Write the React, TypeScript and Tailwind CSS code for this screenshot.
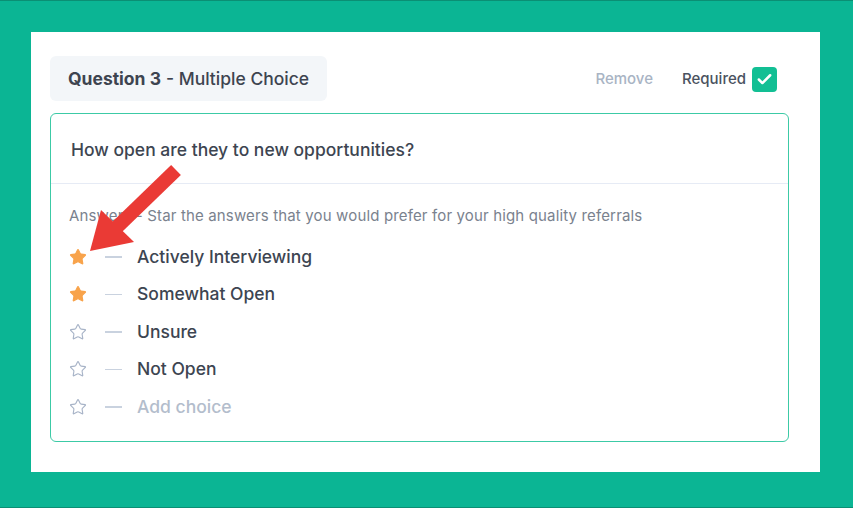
import { Star, Check } from "lucide-react";

const choices = [
  { label: "Actively Interviewing", starred: true },
  { label: "Somewhat Open", starred: true },
  { label: "Unsure", starred: false },
  { label: "Not Open", starred: false },
];

const Row = ({ label, starred, muted }: { label: string; starred: boolean; muted?: boolean }) => (
  <div className="flex h-[37.5px] items-center">
    <div className="flex w-[19px] justify-center">
      {starred ? (
        <Star className="h-[18px] w-[18px] text-[#f8a34b]" fill="#f8a34b" strokeWidth={1.5} />
      ) : (
        <Star className="h-[18px] w-[18px] text-[#a7b3c7]" strokeWidth={1.5} />
      )}
    </div>
    <div className="ml-[18px] h-[1.5px] w-[17px] bg-[#c9d2df]" />
    <span
      className={`ml-[15px] text-[17.5px] font-medium ${muted ? "text-[#b3bdcc]" : "text-[#3d4551]"}`}
    >
      {label}
    </span>
  </div>
);

export default function App() {
  return (
    <div
      className="relative h-[508px] w-[853px] border-b border-t border-[#0b8f74] bg-[#0bb594] pl-[31px] pr-[33px] pt-[31px] pb-[35px]"
      style={{ fontFamily: "Inter, 'Noto Sans', sans-serif" }}
    >
      <div className="h-[440px] bg-white pl-[19px] pr-[31px] pt-[24px]">
        {/* Header */}
        <div className="flex h-[45px] items-center justify-between">
          <div className="flex h-[45px] items-center rounded-md bg-[#f3f6f9] px-[18px] pt-[2px] text-[17.5px] text-[#3d4450]">
            <span className="font-bold">Question 3</span>
            <span className="ml-[5px] font-medium">- Multiple Choice</span>
          </div>
          <div className="flex items-center pr-[12px] pt-[2px]">
            <span className="text-[15px] font-medium text-[#a9b4c4]">Remove</span>
            <span className="ml-[29px] text-[15px] font-medium text-[#4a5260]">Required</span>
            <div className="ml-[6px] flex h-[25px] w-[25px] items-center justify-center rounded-[4px] bg-[#12bf94]">
              <Check className="h-[17px] w-[17px] text-white" strokeWidth={3.5} />
            </div>
          </div>
        </div>

        {/* Card */}
        <div className="mt-[12px] h-[329px] rounded-md border-[1.5px] border-[#3ccaa6]">
          <div className="flex h-[70px] items-center border-b border-[#e6ebf5] pl-[20px] pt-[4px]">
            <span className="text-[17.5px] font-medium text-[#3d4551]">
              How open are they to new opportunities?
            </span>
          </div>
          <div className="pl-[18px] pr-[20px] pt-[23px]">
            <p className="text-[15px] leading-[18px] tracking-[0.15px] text-[#7a828e]">
              Answers - Star the answers that you would prefer for your high quality referrals
            </p>
            <div className="mt-[13px] -ml-[1px]">
              {choices.map((c) => (
                <Row key={c.label} label={c.label} starred={c.starred} />
              ))}
              <Row label="Add choice" starred={false} muted />
            </div>
          </div>
        </div>
      </div>

      {/* Annotation arrow */}
      <svg className="pointer-events-none absolute left-0 top-0" width="853" height="508" viewBox="0 0 853 508">
        <line x1="176" y1="169" x2="115" y2="228" stroke="#ea3a35" strokeWidth="14" />
        <polygon points="101,209 134,241 90,250" fill="#ea3a35" />
      </svg>
    </div>
  );
}
